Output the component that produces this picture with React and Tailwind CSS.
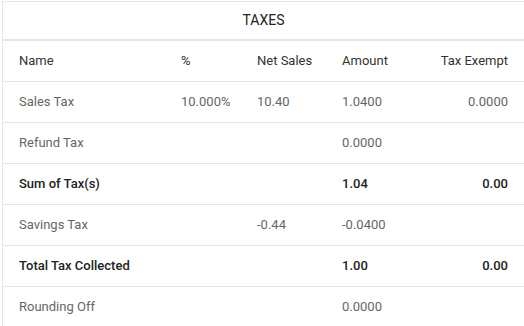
import React from 'react';

const rows = [
  { name: 'Sales Tax', pct: '10.000%', net: '10.40', amount: '1.0400', exempt: '0.0000' },
  { name: 'Refund Tax', pct: '', net: '', amount: '0.0000', exempt: '' },
  { name: 'Sum of Tax(s)', pct: '', net: '', amount: '1.04', exempt: '0.00', bold: true },
  { name: 'Savings Tax', pct: '', net: '-0.44', amount: '-0.0400', exempt: '' },
  { name: 'Total Tax Collected', pct: '', net: '', amount: '1.00', exempt: '0.00', bold: true },
  { name: 'Rounding Off', pct: '', net: '', amount: '0.0000', exempt: '' },
];

const Row = ({ cells, className }) => (
  <div className={`flex items-center pl-4 pr-4 h-[41px] border-b border-[#e6e6e6] text-[13px] ${className}`}>
    <div className="w-[162px]">{cells[0]}</div>
    <div className="w-[76px]">{cells[1]}</div>
    <div className="w-[85px]">{cells[2]}</div>
    <div className="flex-1">{cells[3]}</div>
    <div className="text-right">{cells[4]}</div>
  </div>
);

export default function App() {
  return (
    <div className="w-[524px] h-[326px] overflow-hidden bg-white pt-px" style={{ fontFamily: 'Roboto, "Liberation Sans", sans-serif' }}>
      <div className="ml-[2px] border-l border-t border-[#e6e6e6]">
        <div className="h-[39px] flex items-center justify-center text-[14px] text-[#222] border-b-2 border-[#e6e6e6]">
          TAXES
        </div>
        <Row cells={['Name', '%', 'Net Sales', 'Amount', 'Tax Exempt']} className="text-[#333]" />
        {rows.map((r) => (
          <Row
            key={r.name}
            cells={[r.name, r.pct, r.net, r.amount, r.exempt]}
            className={r.bold ? 'text-[#222] font-medium' : 'text-[#666]'}
          />
        ))}
      </div>
    </div>
  );
}
